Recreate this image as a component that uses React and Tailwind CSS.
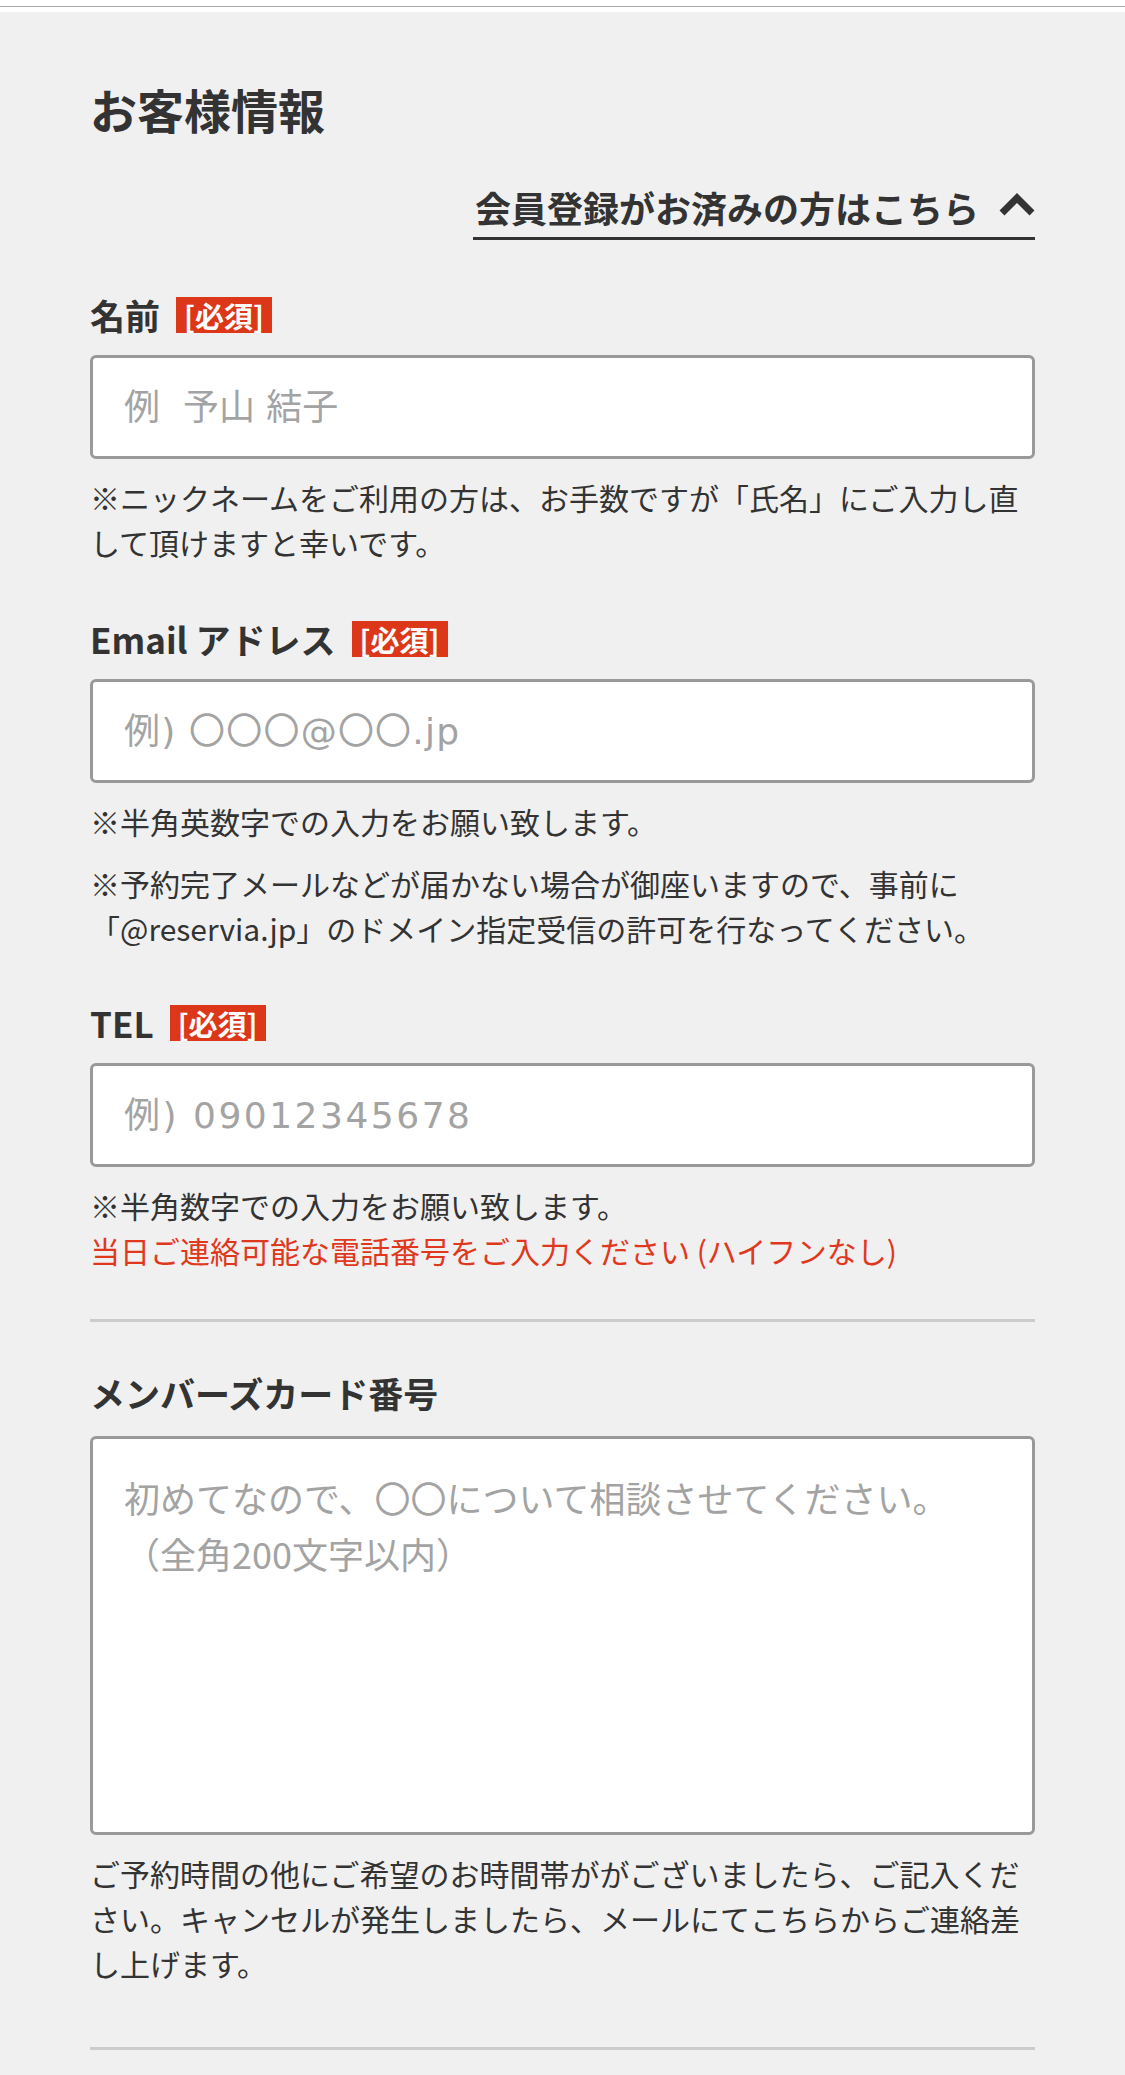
import React from "react";

const FONT = "font-['Noto_Sans_CJK_JP','Noto_Sans',sans-serif]";

function Required() {
  return (
    <span className="inline-flex items-center h-[36px] px-[8px] bg-[#dc3719] text-white text-[29px] font-bold leading-[36px]">
      [必須]
    </span>
  );
}

function FieldLabel({ children, required }) {
  return (
    <div className="flex items-center h-[45px] gap-[16px]">
      <span className="text-[35px] font-bold leading-[45px]">{children}</span>
      {required && <Required />}
    </div>
  );
}

// Latin placeholders in the reference are wide, so DejaVu Sans goes first for inputs
function TextInput({ placeholder, type = "text", tracking = "" }) {
  return (
    <input
      type={type}
      placeholder={placeholder}
      className={`mt-[18px] block w-full h-[104px] border-[3px] border-[#999] rounded-[6px] bg-white px-[31px] text-[36px] text-[#333] outline-none placeholder:text-[#a3a3a3] font-['DejaVu_Sans','Noto_Sans_CJK_JP',sans-serif] ${tracking}`}
    />
  );
}

export default function App() {
  return (
    <div className={`min-h-screen bg-[#f0f0f0] text-[#333] ${FONT}`}>
      {/* top strip */}
      <div className="bg-white pt-[6px] pb-[5px]">
        <div className="h-px bg-[#aaa]" />
      </div>

      <div className="px-[90px] pb-[40px]">
        <h2 className="pt-[65px] text-[47px] font-bold leading-[64px]">お客様情報</h2>

        {/* member login toggle */}
        <div className="mt-[44px] flex justify-end">
          <button className="flex items-center gap-[20px] border-b-[3px] border-[#333] pb-[8px] pl-[2px] text-[36px] font-bold leading-[44px] text-[#333]">
            会員登録がお済みの方はこちら
            <svg width="36" height="24" viewBox="0 0 36 24" className="mt-[-4px]">
              <polyline
                points="3,20 18,5 33,20"
                fill="none"
                stroke="#333"
                strokeWidth="7"
              />
            </svg>
          </button>
        </div>

        {/* name */}
        <div className="mt-[52px]">
          <FieldLabel required>名前</FieldLabel>
          <TextInput placeholder={"例 \u00a0予山 結子"} />
          <p className="mt-[16px] text-[30px] leading-[45px]">
            ※ニックネームをご利用の方は、お手数ですが「氏名」にご入力し直して頂けますと幸いです。
          </p>
        </div>

        {/* email */}
        <div className="mt-[51px]">
          <FieldLabel required>Email アドレス</FieldLabel>
          <TextInput type="email" placeholder="例) 〇〇〇@〇〇.jp" tracking="tracking-[1.2px]" />
          <p className="mt-[16px] text-[30px] leading-[45px]">※半角英数字での入力をお願い致します。</p>
          <p className="mt-[17px] text-[30px] leading-[45px]">
            ※予約完了メールなどが届かない場合が御座いますので、事前に
            <br />
            「@reservia.jp」のドメイン指定受信の許可を行なってください。
          </p>
        </div>

        {/* tel */}
        <div className="mt-[49px]">
          <FieldLabel required>TEL</FieldLabel>
          <TextInput type="tel" placeholder="例) 09012345678" tracking="tracking-[2.5px]" />
          <p className="mt-[16px] text-[30px] leading-[45px]">※半角数字での入力をお願い致します。</p>
          <p className="text-[30px] leading-[45px] text-[#e0381c]">
            当日ご連絡可能な電話番号をご入力ください (ハイフンなし)
          </p>
        </div>

        <div className="mt-[46px] h-[3px] bg-[#cccccc]" />

        {/* member card */}
        <div className="mt-[48px]">
          <FieldLabel>メンバーズカード番号</FieldLabel>
          <textarea
            placeholder={"初めてなので、〇〇について相談させてください。\n（全角200文字以内）"}
            className="mt-[21px] block w-full h-[399px] resize-none border-[3px] border-[#999] rounded-[6px] bg-white px-[31px] py-[30px] text-[36px] leading-[56px] text-[#333] outline-none placeholder:text-[#a3a3a3]"
          />
          <p className="mt-[16px] text-[30px] leading-[45px]">
            ご予約時間の他にご希望のお時間帯ががございましたら、ご記入ください。キャンセルが発生しましたら、メールにてこちらからご連絡差し上げます。
          </p>
        </div>

        <div className="mt-[61px] h-[3px] bg-[#cccccc]" />
      </div>
    </div>
  );
}
